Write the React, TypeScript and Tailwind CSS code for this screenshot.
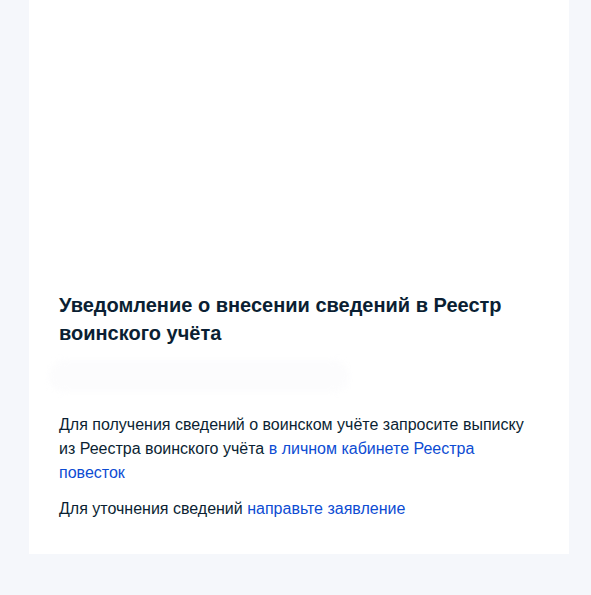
export default function App() {
  return (
    <div className="min-h-screen bg-[#f5f7fb] font-['Liberation_Sans',Arial,sans-serif]">
      <div className="mx-[29px] w-[540px] bg-white px-[30px] pt-[291px] pb-[33px] text-[#0b1f33]">
        <h1 className="text-[20px] font-bold leading-[28px]">
          Уведомление о внесении сведений в Реестр воинского учёта
        </h1>

        <div className="mt-[13px] mb-[21px] -ml-[10px] h-[32px] w-[300px] rounded-full bg-[#fcfcfd] blur-[3px]" />

        <p className="text-[16px] leading-[24px]">
          Для получения сведений о воинском учёте запросите выписку из Реестра воинского учёта{' '}
          <a href="#" className="text-[#0d4cd3]">в личном кабинете Реестра повесток</a>
        </p>
        <p className="mt-[12px] text-[16px] leading-[24px]">
          Для уточнения сведений <a href="#" className="text-[#0d4cd3]">направьте заявление</a>
        </p>
      </div>
    </div>
  );
}
